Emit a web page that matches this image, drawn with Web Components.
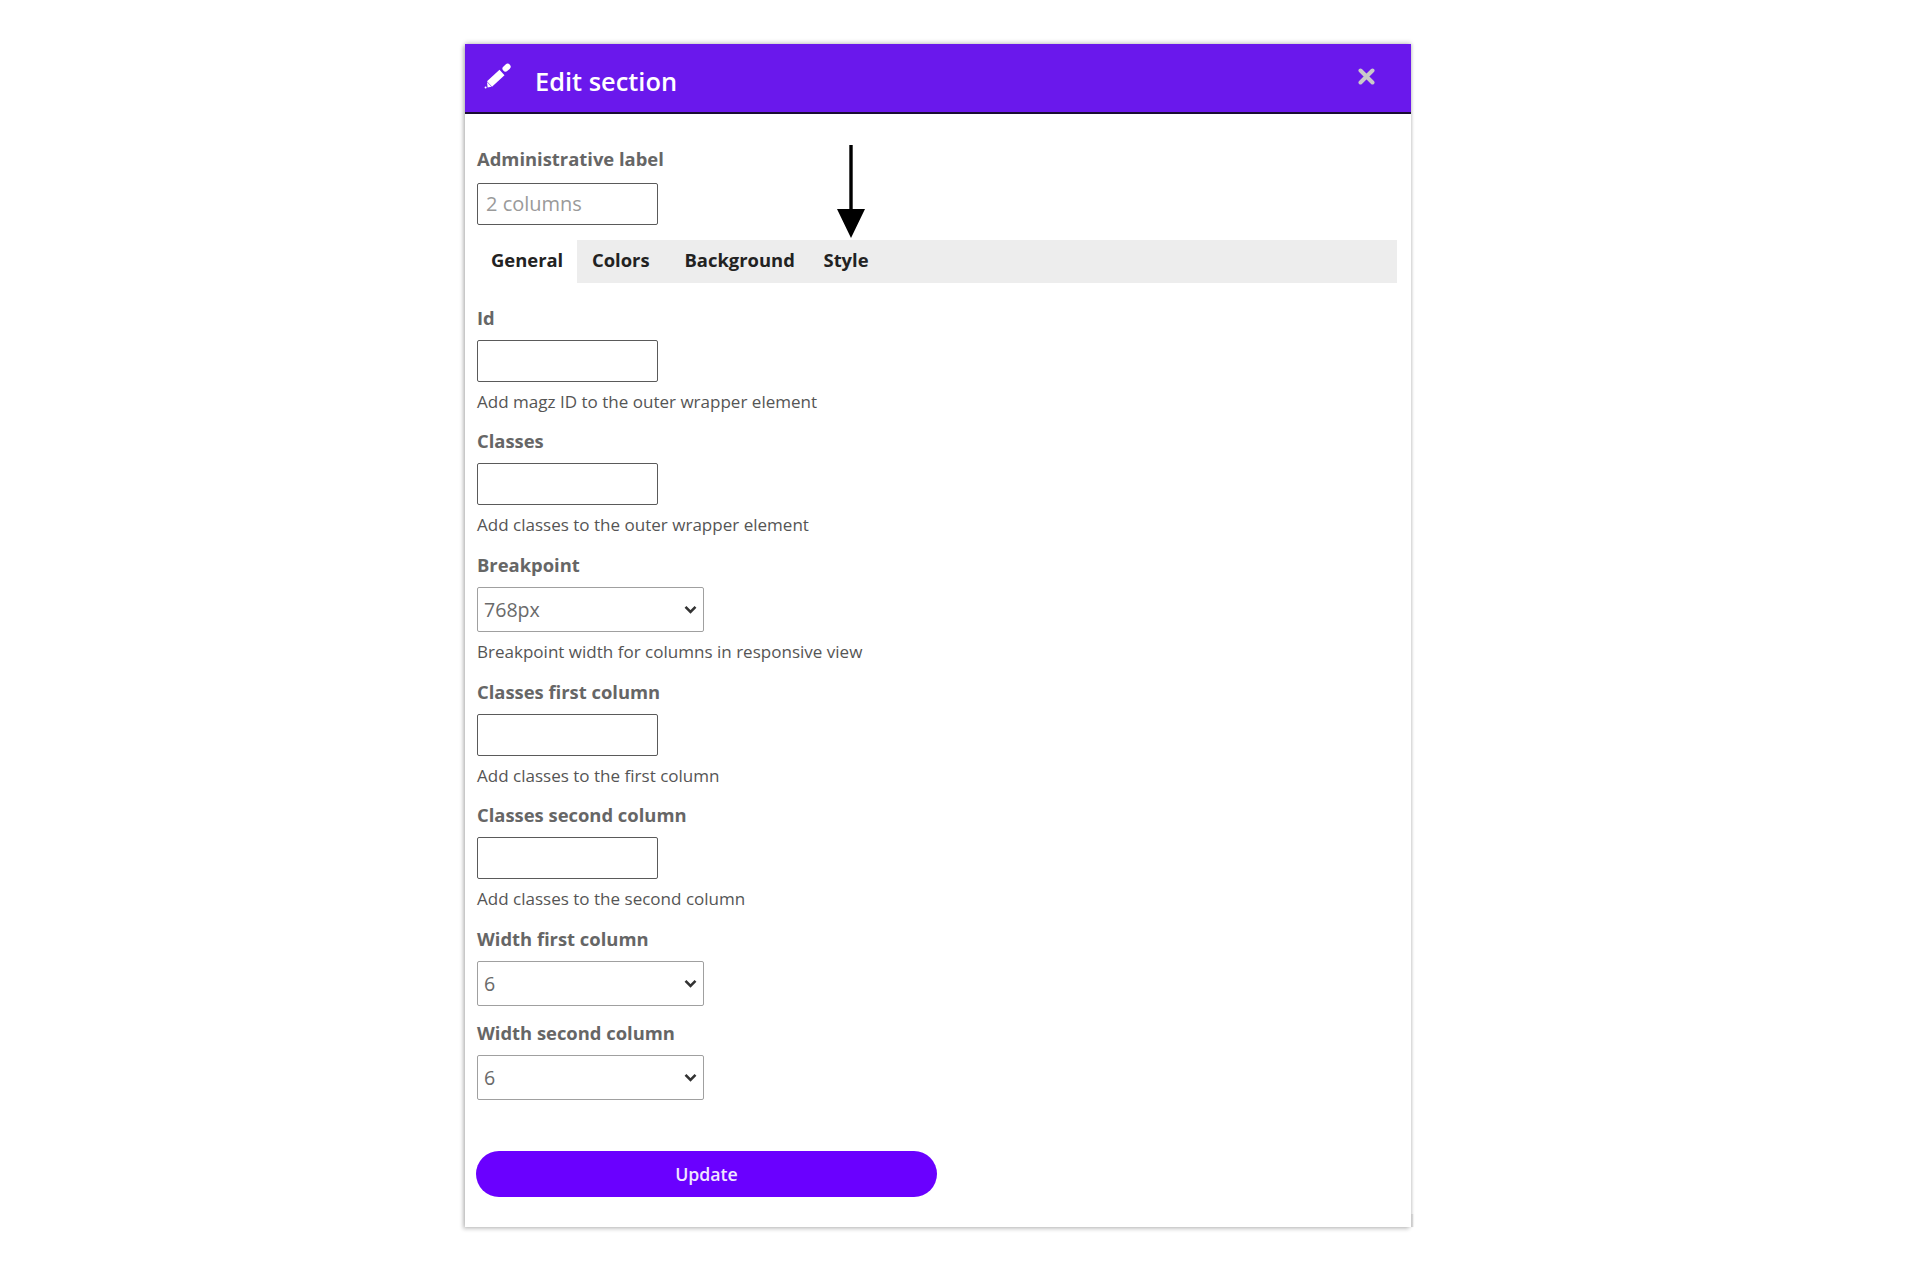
<!DOCTYPE html>
<html><head><meta charset="utf-8"><style>
html,body{margin:0;background:#fff}
body{font-family:"Open Sans",sans-serif;padding:44px 0 0 465px;height:1236px;box-sizing:content-box}
</style></head><body>
<edit-dialog>
  <form-field label="Administrative label" kind="input" value="2 columns" first></form-field>
  <tab-bar></tab-bar>
  <form-field label="Id" kind="input" help="Add magz ID to the outer wrapper element"></form-field>
  <form-field label="Classes" kind="input" help="Add classes to the outer wrapper element"></form-field>
  <form-field label="Breakpoint" kind="select" value="768px" help="Breakpoint width for columns in responsive view"></form-field>
  <form-field label="Classes first column" kind="input" help="Add classes to the first column"></form-field>
  <form-field label="Classes second column" kind="input" help="Add classes to the second column"></form-field>
  <form-field label="Width first column" kind="select" value="6"></form-field>
  <form-field label="Width second column" kind="select" value="6"></form-field>
  <pill-button>Update</pill-button>
</edit-dialog>
<script>
customElements.define('edit-dialog',class extends HTMLElement{constructor(){super();this.attachShadow({mode:'open'}).innerHTML=`<style>
:host{display:block;width:946px;height:1183px;background:#fff;box-shadow:-2px 1.5px 4px rgba(0,0,0,.22),2px 0 2px rgba(0,0,0,.06),0 -2px 4px rgba(0,0,0,.15);position:relative;font-family:"Open Sans",sans-serif}
header{height:67.5px;background:#6a18ec;border-bottom:2px solid #1a0d33;display:flex;align-items:center;padding:0 0 0 13px;color:#fff;box-sizing:content-box}
header .t{margin-left:17px;margin-top:6px;font-weight:600;font-size:25.4px}
header svg.p{width:40px;height:40px;display:block;margin-top:-3px;flex:none}
header svg.x{width:17px;height:17px;margin-left:auto;margin-right:36px;margin-top:-3px}
main{padding:33.5px 14px 0 12px;display:flex;flex-direction:column}
.arrow{position:absolute;left:372px;top:101px;width:28px;height:93px}
.notch{position:absolute;right:-3px;bottom:0;width:3px;height:13px;background:linear-gradient(90deg,#ccc 40%,#fff)}
</style><header><svg class="p" viewBox="0 0 40 40"><path fill="#fff" d="M14 30.7 9 25.3 21.5 13.8 26.5 19.2zM9 25.9 13.4 30.7 9.6 31.4z"/><path d="M27.5 12.6 29.6 10.7" stroke="#fff" stroke-width="6" stroke-linecap="round"/><circle cx="7.6" cy="31.6" r="1" fill="#fff"/></svg><span class="t">Edit section</span><svg class="x" viewBox="0 0 17 17"><path d="M2.5 2.5 14.5 14.5M14.5 2.5 2.5 14.5" stroke="#c9c9c9" stroke-width="4" stroke-linecap="round"/></svg></header>
<main><slot></slot></main>
<svg class="arrow" viewBox="0 0 28 93"><path d="M12.3 0h3.4v64h12.3L14 93 0 64h12.3z" fill="#000"/></svg><div class="notch"></div>`}});

customElements.define('form-field',class extends HTMLElement{constructor(){super();this.attachShadow({mode:'open'})}
connectedCallback(){const k=this.getAttribute('kind'),v=this.getAttribute('value')||'',h=this.getAttribute('help');
const ctrl=k==='select'?`<div class="s"><select><option>${v}</option></select><svg viewBox="0 0 13 9"><path d="M1.5 1.8 6.5 6.8 11.5 1.8" fill="none" stroke="#333" stroke-width="2.6"/></svg></div>`:`<input type="text" placeholder="${v}">`;
this.shadowRoot.innerHTML=`<style>
:host{display:block;font-family:"Open Sans",sans-serif;padding-bottom:${h?'16.7px':'15px'}}
label{display:block;font-size:18.4px;font-weight:700;color:#666;line-height:24px;height:24px}
input{display:block;box-sizing:border-box;width:181px;height:42px;margin:${this.hasAttribute('first')?'11.5px':'10px'} 0 0;padding:0 8px;border:1.5px solid #5a5a5a;border-radius:2px;font:400 20px "Open Sans",sans-serif;background:#fff;outline:0}
input::placeholder{color:#9a9a9a;opacity:1}
.s{position:relative;width:227px;margin-top:10px}
select{display:block;appearance:none;-webkit-appearance:none;box-sizing:border-box;width:227px;height:45px;margin:0;padding:0 0 0 6px;border:1.5px solid #a0a0a0;border-radius:2px;font:400 19.6px "Open Sans",sans-serif;color:#6a6a6a;background:#fff}
.s svg{position:absolute;right:7px;top:18px;width:13px;height:9px;pointer-events:none}
.h{font-size:17.05px;line-height:22px;color:#555;margin-top:9px}
</style><label>${this.getAttribute('label')}</label>${ctrl}${h?`<div class="h">${h}</div>`:''}`}});

customElements.define('tab-bar',class extends HTMLElement{constructor(){super();this.attachShadow({mode:'open'}).innerHTML=`<style>
:host{display:flex;height:43px;background:#ededed;margin-bottom:23px;font:700 18.4px/40px "Open Sans",sans-serif;color:#222}
span{display:block}
.a{background:#fff;width:100px;padding-left:14px;box-sizing:border-box;flex:none}
.c{margin-left:15px;width:92.5px}.b{width:139px}
</style><span class="a">General</span><span class="c">Colors</span><span class="b">Background</span><span>Style</span>`}});

customElements.define('pill-button',class extends HTMLElement{constructor(){super();this.attachShadow({mode:'open'}).innerHTML=`<style>
:host{display:block;width:461px;height:46px;margin-top:36px;margin-left:-1px;border-radius:23px;background:#6a00ff;color:#f0e6ff;text-align:center;font:600 17.7px/46px "Open Sans",sans-serif}
</style><slot></slot>`}});
</script>
</body></html>
